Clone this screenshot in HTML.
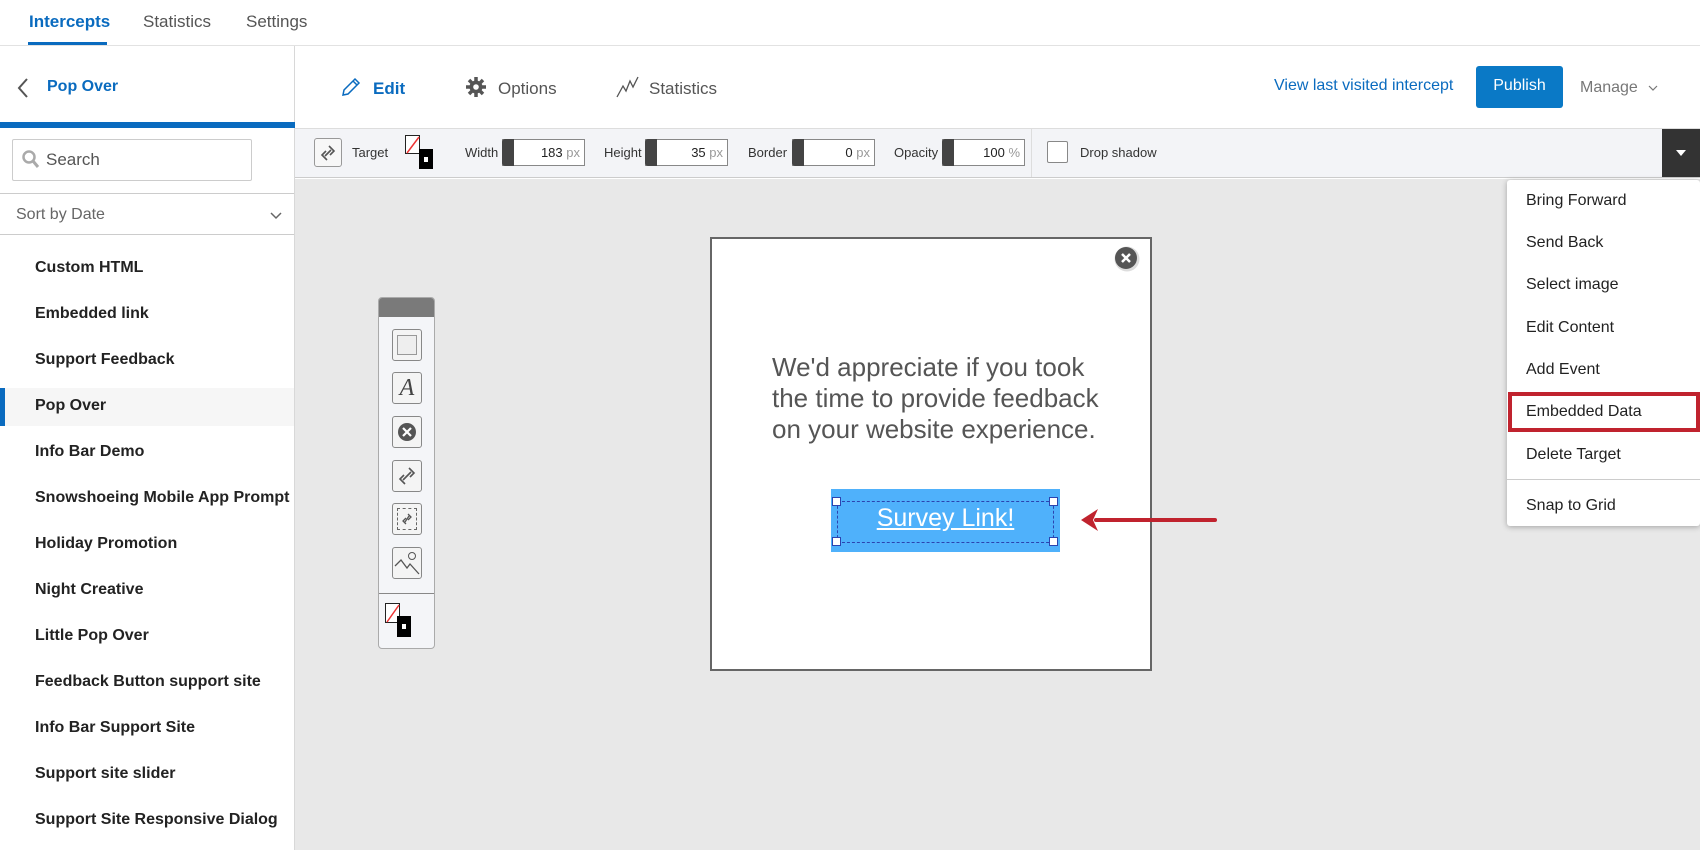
<!DOCTYPE html>
<html><head><meta charset="utf-8"><style>
*{margin:0;padding:0;box-sizing:border-box}
body{width:1700px;height:850px;overflow:hidden;font-family:"Liberation Sans",sans-serif;background:#fff;position:relative;color:#333}
.a{position:absolute}
.nav{font-size:17px;top:12px;color:#555}
.item{position:absolute;left:35px;font-size:16px;font-weight:bold;color:#222}
.menu div.m{position:absolute;left:19px;font-size:16px;color:#222}
.lbl{position:absolute;top:145px;font-size:13px;color:#333}
.spin{position:absolute;top:139px;height:27px;border:1px solid #888;background:#fff;font-size:13px;text-align:right;padding:5px 4px 0 0;color:#222}
.spin:before{content:"";position:absolute;left:-1px;top:-1px;width:12px;height:27px;background:#444;border-radius:3px 0 0 3px}
.spin span{color:#999}
.tb{position:absolute;left:13px;width:30px;height:32px;border:1px solid #888;border-radius:3px;background:#f4f4f4}
</style></head><body>
<!-- top nav -->
<div class="a nav" style="left:29px;color:#0a6bbf;font-weight:bold">Intercepts</div>
<div class="a nav" style="left:143px">Statistics</div>
<div class="a nav" style="left:246px">Settings</div>
<div class="a" style="left:28px;top:42px;width:79px;height:3px;background:#0a6bbf"></div>
<div class="a" style="left:0;top:45px;width:1700px;height:1px;background:#e2e2e2"></div>
<!-- sidebar -->
<div class="a" style="left:294px;top:46px;width:1px;height:804px;background:#d8d8d8"></div>
<svg class="a" style="left:16px;top:77px" width="14" height="22"><path d="M11 2 L3 11 L11 20" stroke="#555" stroke-width="2" fill="none"/></svg>
<div class="a" style="left:47px;top:78px;font-size:16px;font-weight:bold;color:#0a6bbf">Pop Over</div>
<div class="a" style="left:0;top:122px;width:295px;height:6px;background:#0a6bbf"></div>
<div class="a" style="left:12px;top:139px;width:240px;height:42px;border:1px solid #ccc;border-radius:2px"></div>
<svg class="a" style="left:22px;top:150px" width="18" height="20"><circle cx="7" cy="7" r="5.5" stroke="#aaa" stroke-width="2.5" fill="none"/><path d="M11 11 L16 17" stroke="#aaa" stroke-width="3"/></svg>
<div class="a" style="left:46px;top:150px;font-size:17px;color:#555">Search</div>
<div class="a" style="left:0;top:193px;width:294px;height:1px;background:#ccc"></div>
<div class="a" style="left:16px;top:206px;font-size:16px;color:#666">Sort by Date</div>
<svg class="a" style="left:270px;top:212px" width="12" height="8"><path d="M1 1 L6 6 L11 1" stroke="#666" stroke-width="1.5" fill="none"/></svg>
<div class="a" style="left:0;top:234px;width:294px;height:1px;background:#ccc"></div>
<div class="a" style="left:0;top:388px;width:294px;height:38px;background:#f6f6f6"></div>
<div class="a" style="left:0;top:388px;width:5px;height:38px;background:#0a6bbf"></div>
<div class="item" style="top:259px">Custom HTML</div>
<div class="item" style="top:305px">Embedded link</div>
<div class="item" style="top:351px">Support Feedback</div>
<div class="item" style="top:397px">Pop Over</div>
<div class="item" style="top:443px">Info Bar Demo</div>
<div class="item" style="top:489px">Snowshoeing Mobile App Prompt</div>
<div class="item" style="top:535px">Holiday Promotion</div>
<div class="item" style="top:581px">Night Creative</div>
<div class="item" style="top:627px">Little Pop Over</div>
<div class="item" style="top:673px">Feedback Button support site</div>
<div class="item" style="top:719px">Info Bar Support Site</div>
<div class="item" style="top:765px">Support site slider</div>
<div class="item" style="top:811px">Support Site Responsive Dialog</div>
<!-- main header -->
<svg class="a" style="left:340px;top:76px" width="22" height="22"><path d="M3 19 L4 14 L15 3 L19 7 L8 18 Z M13 5 L17 9" stroke="#0a6bbf" stroke-width="1.5" fill="none"/></svg>
<div class="a" style="left:373px;top:79px;font-size:17px;font-weight:bold;color:#0a6bbf">Edit</div>
<svg class="a" style="left:465px;top:76px" width="22" height="22" viewBox="0 0 22 22"><g stroke="#555" stroke-width="3.5"><path d="M11 1v20M1 11h20M4 4l14 14M18 4L4 18"/></g><circle cx="11" cy="11" r="6.5" fill="#555"/><circle cx="11" cy="11" r="2.8" fill="#fff"/></svg>
<div class="a" style="left:498px;top:79px;font-size:17px;color:#555">Options</div>
<svg class="a" style="left:616px;top:75px" width="24" height="24"><path d="M1 22 L7 11 L10 16 L14 6 L17 12 L22 2" stroke="#555" stroke-width="1.3" fill="none"/></svg>
<div class="a" style="left:649px;top:79px;font-size:17px;color:#555">Statistics</div>
<div class="a" style="left:1274px;top:77px;font-size:16px;color:#0a6bbf">View last visited intercept</div>
<div class="a" style="left:1476px;top:66px;width:87px;height:42px;background:#0a79c6;border-radius:3px;color:#fff;font-size:16px;text-align:center;line-height:40px">Publish</div>
<div class="a" style="left:1580px;top:79px;font-size:16px;color:#777">Manage</div>
<svg class="a" style="left:1648px;top:85px" width="10" height="7"><path d="M1 1 L5 5 L9 1" stroke="#777" stroke-width="1.2" fill="none"/></svg>
<!-- toolbar -->
<div class="a" style="left:295px;top:128px;width:1405px;height:50px;background:#f3f4f7;border-top:1px solid #ddd;border-bottom:1px solid #ccc"></div>
<div class="a" style="left:314px;top:138px;width:28px;height:29px;border:1px solid #999;border-radius:3px;background:#f7f7f7"></div>
<svg class="a" style="left:320px;top:144px" width="16" height="18"><path d="M9 2 L14 7 L10 11 M7 16 L2 11 L6 7 M5 12 L11 6" stroke="#555" stroke-width="1.6" fill="none"/></svg>
<div class="lbl" style="left:352px">Target</div>
<div class="a" style="left:405px;top:135px;width:15px;height:19px;border:1px solid #222;background:#fff"></div>
<svg class="a" style="left:405px;top:135px" width="16" height="20"><path d="M2 18 L14 2" stroke="#e33" stroke-width="1.5"/></svg>
<div class="a" style="left:419px;top:149px;width:14px;height:20px;background:#000"></div>
<div class="a" style="left:424px;top:157px;width:4px;height:5px;background:#fff"></div>
<div class="lbl" style="left:465px">Width</div>
<div class="spin" style="left:502px;width:83px">183 <span>px</span></div>
<div class="lbl" style="left:604px">Height</div>
<div class="spin" style="left:645px;width:83px">35 <span>px</span></div>
<div class="lbl" style="left:748px">Border</div>
<div class="spin" style="left:792px;width:83px">0 <span>px</span></div>
<div class="lbl" style="left:894px">Opacity</div>
<div class="spin" style="left:942px;width:83px">100 <span>%</span></div>
<div class="a" style="left:1031px;top:129px;width:1px;height:48px;background:#ddd"></div>
<div class="a" style="left:1047px;top:141px;width:21px;height:22px;border:1px solid #888;background:#fff;border-radius:2px"></div>
<div class="lbl" style="left:1080px">Drop shadow</div>
<div class="a" style="left:1662px;top:129px;width:38px;height:48px;background:#333"></div>
<svg class="a" style="left:1676px;top:150px" width="10" height="7"><path d="M0 0 L10 0 L5 6 Z" fill="#fff"/></svg>
<!-- canvas -->
<div class="a" style="left:295px;top:179px;width:1405px;height:671px;background:#e8e8e8"></div>
<!-- toolbox -->
<div class="a" style="left:378px;top:297px;width:57px;height:352px;background:#f4f5f8;border:1px solid #aaa;border-radius:4px;overflow:hidden">
<div style="height:19px;background:#7a7a7a"></div>
<div class="tb" style="top:31px"><div style="margin:5px 4px;width:20px;height:20px;border:1px solid #999;background:#eee"></div></div>
<div class="tb" style="top:74px;font-family:'Liberation Serif',serif;font-style:italic;font-size:24px;text-align:center;line-height:30px;color:#444">A</div>
<div class="tb" style="top:118px"><svg width="28" height="30"><circle cx="14" cy="15" r="9" fill="#555"/><path d="M10 11 L18 19 M18 11 L10 19" stroke="#fff" stroke-width="2.2"/></svg></div>
<div class="tb" style="top:162px"><svg width="28" height="30"><path d="M16 7 L21 12 L17 16 M12 23 L7 18 L11 14 M10 19 L18 11" stroke="#555" stroke-width="1.6" fill="none"/></svg></div>
<div class="tb" style="top:205px"><div style="position:absolute;left:4px;top:4px;width:20px;height:22px;border:1px dashed #666"></div><svg width="28" height="30"><path d="M15 10 L18 13 L15 16 M13 20 L10 17 L13 14 M12 18 L16 12" stroke="#555" stroke-width="1.3" fill="none"/></svg></div>
<div class="tb" style="top:249px"><svg width="28" height="30"><path d="M2 18 L8 12 L14 20 L17 16 L26 26" stroke="#555" stroke-width="1.3" fill="none"/><circle cx="19" cy="8" r="3.5" stroke="#555" fill="none"/></svg></div>
<div style="position:absolute;left:0;top:295px;width:57px;height:1px;background:#888"></div>
<div style="position:absolute;left:6px;top:305px;width:15px;height:20px;border:1px solid #222;background:#fff"></div>
<svg style="position:absolute;left:6px;top:305px" width="16" height="21"><path d="M2 19 L14 2" stroke="#e33" stroke-width="1.5"/></svg>
<div style="position:absolute;left:18px;top:318px;width:14px;height:21px;background:#000"></div>
<div style="position:absolute;left:23px;top:326px;width:4px;height:5px;background:#fff"></div>
</div>
<!-- popup -->
<div class="a" style="left:710px;top:237px;width:442px;height:434px;background:#fff;border:2px solid #666"></div>
<svg class="a" style="left:1113px;top:245px" width="28" height="28"><circle cx="14" cy="14" r="12.5" fill="#ddd"/><circle cx="13" cy="13" r="11" fill="#555"/><path d="M9 9 L17 17 M17 9 L9 17" stroke="#fff" stroke-width="2.5"/></svg>
<div class="a" style="left:772px;top:352px;font-size:26px;line-height:31px;color:#555">We'd appreciate if you took<br>the time to provide feedback<br>on your website experience.</div>
<div class="a" style="left:831px;top:489px;width:229px;height:63px;background:#4fb1fb"></div>
<div class="a" style="left:837px;top:501px;width:217px;height:42px;border:1px dashed #2b44b0"></div>
<div class="a" style="left:831px;top:504px;width:229px;text-align:center;font-size:25px;color:#fff;text-decoration:underline">Survey Link!</div>
<div class="a" style="left:832px;top:497px;width:9px;height:9px;border:1px solid #2b44b0;background:#fff"></div>
<div class="a" style="left:1049px;top:497px;width:9px;height:9px;border:1px solid #2b44b0;background:#fff"></div>
<div class="a" style="left:832px;top:537px;width:9px;height:9px;border:1px solid #2b44b0;background:#fff"></div>
<div class="a" style="left:1049px;top:537px;width:9px;height:9px;border:1px solid #2b44b0;background:#fff"></div>
<svg class="a" style="left:1078px;top:505px" width="140" height="30"><path d="M18 15 L137 15" stroke="#c0232e" stroke-width="4" stroke-linecap="round"/><path d="M3 15 L20 4 L15 15 L20 26 Z" fill="#c0232e"/></svg>
<!-- menu -->
<div class="a menu" style="left:1507px;top:180px;width:193px;height:346px;background:#fff;border-radius:3px;box-shadow:0 1px 6px rgba(0,0,0,.3)">
<div class="m" style="top:12px">Bring Forward</div>
<div class="m" style="top:54px">Send Back</div>
<div class="m" style="top:96px">Select image</div>
<div class="m" style="top:139px">Edit Content</div>
<div class="m" style="top:181px">Add Event</div>
<div style="position:absolute;left:1px;top:212px;width:192px;height:40px;border:4px solid #c0232e"></div>
<div class="m" style="top:223px">Embedded Data</div>
<div class="m" style="top:266px">Delete Target</div>
<div style="position:absolute;left:0;top:299px;width:193px;height:1px;background:#ccc"></div>
<div class="m" style="top:317px">Snap to Grid</div>
</div>
</body></html>
